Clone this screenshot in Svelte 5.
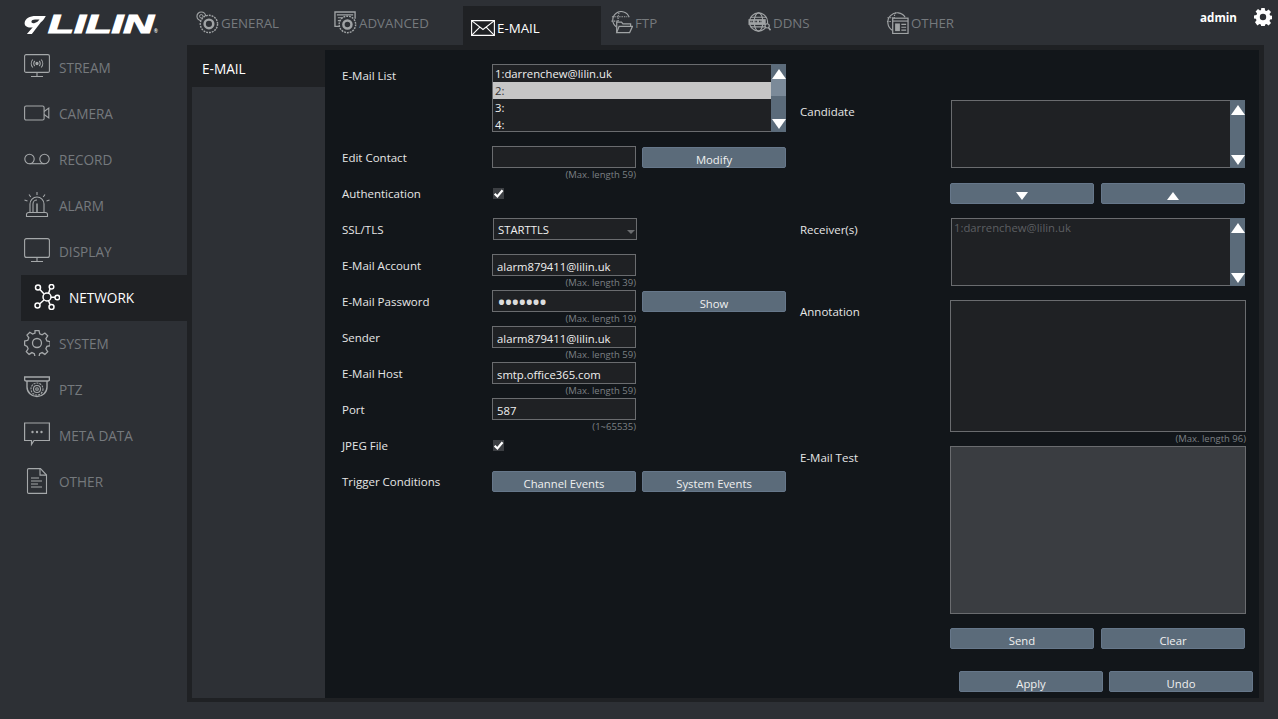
<script>
  const tabs = [
    { name: "GENERAL", icon: "general" },
    { name: "ADVANCED", icon: "advanced" },
    { name: "E-MAIL", icon: "mail", active: true },
    { name: "FTP", icon: "ftp" },
    { name: "DDNS", icon: "ddns" },
    { name: "OTHER", icon: "web" },
  ];

  const nav = [
    { name: "STREAM", icon: "stream" },
    { name: "CAMERA", icon: "camera" },
    { name: "RECORD", icon: "record" },
    { name: "ALARM", icon: "alarm" },
    { name: "DISPLAY", icon: "display" },
    { name: "NETWORK", icon: "network", active: true },
    { name: "SYSTEM", icon: "system" },
    { name: "PTZ", icon: "ptz" },
    { name: "META DATA", icon: "meta" },
    { name: "OTHER", icon: "file" },
  ];

  const contacts = ["1:darrenchew@lilin.uk", "2:", "3:", "4:"];

  const fields = [
    { label: "E-Mail Account", value: "alarm879411@lilin.uk", hint: "(Max. length 39)" },
    { label: "E-Mail Password", value: "•••••••", hint: "(Max. length 19)", button: "Show", dots: true },
    { label: "Sender", value: "alarm879411@lilin.uk", hint: "(Max. length 59)" },
    { label: "E-Mail Host", value: "smtp.office365.com", hint: "(Max. length 59)" },
    { label: "Port", value: "587", hint: "(1~65535)" },
  ];
</script>

{#snippet icon(name)}
  {#if name === "general"}
    <svg class="tab-ico" viewBox="0 0 24 24" fill="none" stroke="currentColor">
      <circle cx="5.5" cy="5.5" r="4.5" stroke-width="1.2" />
      <circle cx="5.5" cy="5.5" r="1.8" stroke-width="1" />
      <circle cx="13.5" cy="13.5" r="9" fill="#2d3035" stroke-width="1.5" stroke-dasharray="2 1" />
      <circle cx="13.5" cy="13.5" r="4.5" stroke-width="2.6" />
    </svg>
  {:else if name === "advanced"}
    <svg class="tab-ico" viewBox="0 0 24 24" fill="none" stroke="currentColor">
      <path d="M7 16H1V1h21v7" stroke-width="1.4" />
      <path d="M3 4h17M4 7h7M4 10h3" stroke-width="1.2" />
      <circle cx="14" cy="14" r="8.6" fill="#2d3035" stroke-width="1.5" stroke-dasharray="2 1" />
      <circle cx="14" cy="14" r="4.2" stroke-width="2.6" />
    </svg>
  {:else if name === "mail"}
    <svg class="tab-ico mail" viewBox="0 0 24 16" fill="none" stroke="#fff" stroke-width="1.1">
      <path d="M.6.6h22.8v14.8H.6z" />
      <path d="M.6.6 12 9.5 23.4.6M.6 15.4l8.2-8.2M23.4 15.4l-8.2-8.2" />
    </svg>
  {:else if name === "ftp"}
    <svg class="tab-ico" viewBox="0 0 24 24" fill="none" stroke="currentColor" stroke-width="1.2">
      <path d="M6.5 16.5A8.8 8.8 0 1 1 20 6.5" />
      <path d="M9.5 2c-1.4 3-1.4 8 0 12M2 6h16M1.500 10.500h7" stroke-dasharray="1.500 1" />
      <path d="M7 22.500V11.500h5l1.500 2h8v3" fill="#2d3035" stroke-width="1.300" />
      <path d="M7 22.500l2.500-6.500h14l-3 6.500z" fill="#2d3035" stroke-width="1.300" />
    </svg>
  {:else if name === "ddns"}
    <svg class="tab-ico" viewBox="0 0 24 24" fill="none" stroke="currentColor" stroke-width="1.2">
      <circle cx="11" cy="11.500" r="9.500" />
      <ellipse cx="11" cy="11.500" rx="4.500" ry="9.500" />
      <path d="M2.500 6.500h17M2.500 16.500h17" />
      <rect x="0.500" y="8.500" width="18" height="6" fill="currentColor" stroke="none" />
      <path d="M2.500 11h3M7 11h3M11.500 11h3" stroke="#2d3035" stroke-width="1.600" stroke-dasharray="1 .5" />
      <circle cx="20" cy="15.500" r="2.200" fill="#2d3035" />
      <path d="m21.500 17.500 2 2.500" stroke-width="1.600" />
    </svg>
  {:else if name === "web"}
    <svg class="tab-ico" viewBox="0 0 24 24" fill="none" stroke="currentColor" stroke-width="1.2">
      <path d="M6.500 20A9.800 9.800 0 1 1 20 6.500" />
      <path d="M10 1.500c-2 4-2 10 0 14M1.500 7h6M1 11h5" stroke-dasharray="1.500 1" />
      <rect x="7" y="7.500" width="16" height="16" fill="#2d3035" stroke-width="1.300" />
      <path d="M7 10.500h16" stroke-width="1.200" />
      <rect x="9.500" y="13" width="5" height="8" fill="currentColor" stroke="none" />
      <path d="M16 14h5M16 17h5M16 20h5" />
    </svg>
  {:else if name === "stream"}
    <svg class="nav-ico" viewBox="0 0 26 26" fill="none" stroke="currentColor" stroke-width="1.100">
      <rect x="0.600" y="0.600" width="24.800" height="17.800" rx="1.500" />
      <path d="M13 18.500v3.500M7 22.500h12" />
      <circle cx="13" cy="9.500" r="1.100" fill="currentColor" />
      <path d="M10.800 7a3.500 3.500 0 0 0 0 5M15.200 7a3.500 3.500 0 0 1 0 5M8.800 5.500a6 6 0 0 0 0 8M17.200 5.500a6 6 0 0 1 0 8" />
    </svg>
  {:else if name === "camera"}
    <svg class="nav-ico" viewBox="0 0 26 26" fill="none" stroke="currentColor" stroke-width="1.100">
      <rect x="0.600" y="6" width="19.500" height="14" rx="1.500" />
      <path d="M20.100 11.500l4.700-3.500v10l-4.700-3.500" />
    </svg>
  {:else if name === "record"}
    <svg class="nav-ico" viewBox="0 0 26 26" fill="none" stroke="currentColor" stroke-width="1.100">
      <circle cx="5.500" cy="13" r="4.700" />
      <circle cx="20.500" cy="13" r="4.700" />
      <path d="M5.500 17.700h15" />
    </svg>
  {:else if name === "alarm"}
    <svg class="nav-ico" viewBox="0 0 26 26" fill="none" stroke="currentColor" stroke-width="1.100">
      <path d="M6 20V12a7 7 0 0 1 14 0v8" />
      <path d="M9 20v-8a4 4 0 0 1 4-4" />
      <path d="M13 11.500V20" stroke-width="1.500" />
      <path d="M2.500 24.500v-2a2 2 0 0 1 2-2h17a2 2 0 0 1 2 2v2z" />
      <path d="M13 0v3M5 2.500l1.800 2.500M21 2.500l-1.800 2.500M.500 8l3 1M25.500 8l-3 1" />
    </svg>
  {:else if name === "display"}
    <svg class="nav-ico" viewBox="0 0 26 26" fill="none" stroke="currentColor" stroke-width="1.100">
      <rect x="0.600" y="0.600" width="24.800" height="18.800" rx="2" />
      <path d="M13 19.500v3.500M7 23.500h12" />
    </svg>
  {:else if name === "network"}
    <svg class="nav-ico" viewBox="0 0 26 26" fill="none" stroke="#fff" stroke-width="1.500">
      <circle cx="13" cy="13" r="4" />
      <circle cx="4" cy="3.500" r="2.500" />
      <circle cx="17.500" cy="2.800" r="2.300" />
      <circle cx="23.300" cy="13.500" r="2.300" />
      <circle cx="17.500" cy="23" r="2.500" />
      <circle cx="3.500" cy="21.500" r="2.500" />
      <path d="M6 5.500l4 4.500M16 5l-1.500 4.500M21 13.300h-4M16 20.500l-1.500-3.900M5.500 20l4.500-4" />
    </svg>
  {:else if name === "system"}
    <svg class="nav-ico" viewBox="0 0 26 26" fill="none" stroke="currentColor" stroke-width="1.300">
      <path d="M11 .6h4l.7 3.200 2.400 1 2.800-1.800 2.800 2.800-1.800 2.800 1 2.400 3.200.7v4l-3.200.7-1 2.400 1.800 2.800-2.800 2.800-2.800-1.800-2.400 1-.7 3.200h-4l-.7-3.200-2.400-1-2.800 1.800-2.800-2.800 1.800-2.800-1-2.400L.6 15v-4l3.200-.7 1-2.400L3 5.100 5.800 2.300l2.800 1.800 2.400-1z" />
      <circle cx="13" cy="13" r="4.500" />
    </svg>
  {:else if name === "ptz"}
    <svg class="nav-ico" viewBox="0 0 26 26" fill="none" stroke="currentColor" stroke-width="1.100">
      <path d="M.6 1h24.800v2.500a1.500 1.500 0 0 1-1.500 1.500H2.100A1.500 1.500 0 0 1 .6 3.500z" stroke-width="1.400" />
      <path d="M3 5v6a10 9.500 0 0 0 20 0V5" stroke-width="1.400" />
      <circle cx="13" cy="13" r="6" stroke-dasharray="2 1" />
      <circle cx="13" cy="13" r="3.500" />
      <circle cx="13" cy="13" r="1.300" />
    </svg>
  {:else if name === "meta"}
    <svg class="nav-ico" viewBox="0 0 26 26" fill="none" stroke="currentColor" stroke-width="1.200">
      <path d="M.6 1h24.800v17.500H10L7.500 22.500v-4H.6z" />
      <circle cx="8.500" cy="10" r="1.200" fill="currentColor" stroke="none" />
      <circle cx="13" cy="10" r="1.200" fill="currentColor" stroke="none" />
      <circle cx="17.500" cy="10" r="1.200" fill="currentColor" stroke="none" />
    </svg>
  {:else if name === "file"}
    <svg class="nav-ico" viewBox="0 0 26 26" fill="none" stroke="currentColor" stroke-width="1.100">
      <path d="M4.700.6h11.800l6 6.400v18.400H4.700a1.200 1.200 0 0 1-1.200-1.200V1.800A1.200 1.200 0 0 1 4.700.6z" />
      <path d="M16 .6v6.500h6.500" />
      <path d="M7 10h8M7 13h11M7 16h7M7 19h11" />
    </svg>
  {/if}
{/snippet}

{#snippet scrollbar(thumb)}
  <div class="scrollbar">
    <span class="arrow up"></span>
    {#if thumb}<span class="thumb"></span>{/if}
    <span class="arrow down"></span>
  </div>
{/snippet}

{#snippet check()}
  <span class="checkbox">
    <svg viewBox="0 0 10 10" fill="none" stroke="#fff" stroke-width="2"><path d="M1.500 5.200 4 7.700 8.700 2" /></svg>
  </span>
{/snippet}

<div class="page">
  <header class="top">
    <div class="logo">
      <svg viewBox="0 0 24 20" width="22" height="18">
        <path fill="#fff" fill-rule="evenodd" d="M13 0h11c-1.500 3-3 5-5.500 7L8.500 20H3l6.500-7.500C5 13.500 0 12 .5 7.500 1 3 6 0 13 0zM8 6.500c0 1.200 1 1.800 3 1.500 3-.5 5-2.500 6-4h-5c-2 0-4 1-4 2.500z" />
      </svg>
      <svg class="wordmark" viewBox="0 0 112 22" width="112" height="22">
        <text x="0" y="20" textLength="106" lengthAdjust="spacingAndGlyphs">LILIN</text>
        <text class="reg" x="106" y="20">®</text>
      </svg>
    </div>
    <nav class="tabs">
      {#each tabs as tab}
        <div class="tab" class:active={tab.active}>
          {@render icon(tab.icon)}
          <span>{tab.name}</span>
        </div>
      {/each}
    </nav>
    <div class="user">
      <span>admin</span>
      <svg viewBox="0 0 18 18" width="18" height="18">
        <path fill="#fff" fill-rule="evenodd" d="M7.300 0h3.400l.4 2.500 1.500.6 2-1.500 2.400 2.400-1.500 2 .6 1.500 2.500.4v3.200l-2.500.4-.6 1.500 1.500 2-2.400 2.400-2-1.500-1.500.6-.4 2.500H7.300l-.4-2.500-1.500-.6-2 1.500L1 14.300l1.500-2-.6-1.500L0 10.600V7.400l2.500-.4.600-1.500L1.600 3.500 4 1.100l2 1.500 1-.6zM9 5.800a3.200 3.200 0 1 0 0 6.400 3.200 3.200 0 0 0 0-6.400z" />
      </svg>
    </div>
  </header>

  <div class="body">
    <aside class="side">
      {#each nav as item}
        <div class="nav-item" class:active={item.active}>
          {@render icon(item.icon)}
          <span>{item.name}</span>
        </div>
      {/each}
    </aside>

    <main class="frame">
      <div class="submenu">
        <div class="sub-item">E-MAIL</div>
      </div>

      <div class="panel">
        <div class="columns">
          <section class="left">
            <div class="row list-row">
              <label>E-Mail List</label>
              <div class="listbox">
                <ul>
                  {#each contacts as contact, i}
                    <li class:selected={i === 1}>{contact}</li>
                  {/each}
                </ul>
                {@render scrollbar(true)}
              </div>
            </div>

            <div class="row">
              <label>Edit Contact</label>
              <div class="field">
                <input type="text" />
                <small>(Max. length 59)</small>
              </div>
              <button>Modify</button>
            </div>

            <div class="row">
              <label>Authentication</label>
              {@render check()}
            </div>

            <div class="row">
              <label>SSL/TLS</label>
              <div class="select">STARTTLS<span class="caret"></span></div>
            </div>

            {#each fields as f}
              <div class="row">
                <label>{f.label}</label>
                <div class="field">
                  <input type="text" class:dots={f.dots} value={f.value} readonly />
                  <small>{f.hint}</small>
                </div>
                {#if f.button}<button>{f.button}</button>{/if}
              </div>
            {/each}

            <div class="row">
              <label>JPEG File</label>
              {@render check()}
            </div>

            <div class="row trigger">
              <label>Trigger Conditions</label>
              <button>Channel Events</button>
              <button>System Events</button>
            </div>
          </section>

          <section class="right">
            <div class="rrow">
              <label>Candidate</label>
              <div class="listbox inset"><ul></ul>{@render scrollbar(false)}</div>
            </div>
            <div class="rrow move-row">
              <span class="spacer"></span>
              <div class="pair">
                <button class="move"><span class="tri down"></span></button>
                <button class="move"><span class="tri up"></span></button>
              </div>
            </div>
            <div class="rrow">
              <label>Receiver(s)</label>
              <div class="listbox inset">
                <ul><li class="muted">1:darrenchew@lilin.uk</li></ul>
                {@render scrollbar(false)}
              </div>
            </div>
            <div class="rrow annotation">
              <label>Annotation</label>
              <div class="area-wrap">
                <textarea></textarea>
                <small>(Max. length 96)</small>
              </div>
            </div>
            <div class="rrow test">
              <label>E-Mail Test</label>
              <div class="test-box"></div>
            </div>
            <div class="rrow">
              <span class="spacer"></span>
              <div class="pair">
                <button>Send</button>
                <button>Clear</button>
              </div>
            </div>
          </section>
        </div>

        <footer class="actions">
          <button>Apply</button>
          <button>Undo</button>
        </footer>
      </div>
    </main>
  </div>
</div>

<style>
  :global(body) {
    background: #2d3035;
    font-family: "Open Sans", "Noto Sans", sans-serif;
    color: #e6e6e6;
  }

  .page {
    width: 1278px;
    height: 719px;
    overflow: hidden;
    display: flex;
    flex-direction: column;
  }

  /* header */
  .top {
    height: 45px;
    display: flex;
    flex-shrink: 0;
  }

  .logo {
    width: 187px;
    box-sizing: border-box;
    padding: 16px 0 0 24px;
    display: flex;
    align-items: flex-start;
    gap: 2px;
  }

  .wordmark {
    margin-top: -3px;
    overflow: visible;
  }

  .wordmark text {
    font-family: "Liberation Sans", sans-serif;
    font-weight: 700;
    font-style: italic;
    font-size: 25px;
    fill: #fff;
    stroke: #fff;
    stroke-width: 1.1px;
  }

  .wordmark .reg {
    font-size: 5px;
    font-style: normal;
    stroke-width: 0;
  }

  .tabs {
    display: flex;
    align-items: flex-end;
    height: 45px;
  }

  .tab {
    width: 138px;
    height: 39px;
    box-sizing: border-box;
    display: flex;
    align-items: center;
    gap: 2px;
    padding: 0 0 6px 9px;
    color: #a0a3a5;
    font-size: 13.3px;
  }

  .tab span {
    color: #75797d;
  }

  .tab.active {
    background: #1f2124;
    padding: 5px 0 0 8px;
  }

  .tab.active span {
    color: #fff;
  }

  .tab-ico {
    width: 23px;
    height: 23px;
    flex-shrink: 0;
  }

  .tab-ico.mail {
    width: 24px;
    height: 16px;
  }

  .user {
    margin-left: auto;
    display: flex;
    gap: 17px;
    padding: 7px 6px 0 0;
    height: 20px;
    align-items: center;
    font-size: 11.6px;
    font-weight: 700;
    color: #fff;
  }

  /* side nav */
  .body {
    display: flex;
    height: 657px;
  }

  .side {
    width: 187px;
    flex-shrink: 0;
    box-sizing: border-box;
    padding-left: 21px;
  }

  .nav-item {
    height: 46px;
    box-sizing: border-box;
    display: flex;
    align-items: center;
    gap: 9px;
    padding: 0 0 2px 3px;
    color: #a5a8aa;
    font-size: 13.6px;
  }

  .nav-item span {
    color: #75797d;
  }

  .nav-item.active {
    background: #1f2124;
    padding-left: 13px;
  }

  .nav-item.active span {
    color: #fff;
  }

  .nav-ico {
    width: 26px;
    height: 26px;
    flex-shrink: 0;
  }

  /* frame */
  .frame {
    width: 1077px;
    box-sizing: border-box;
    padding: 5px 5px 4px;
    background: #1f2124;
    display: flex;
  }

  .submenu {
    width: 133px;
    flex-shrink: 0;
    background: #2d3035;
  }

  .sub-item {
    height: 37px;
    margin-left: -5px;
    padding: 5px 0 0 15px;
    box-sizing: border-box;
    background: #1f2124;
    color: #fff;
    font-size: 13.6px;
    line-height: 28px;
  }

  .panel {
    flex: 1;
    background: #12161a;
    display: flex;
    flex-direction: column;
    font-size: 11.5px;
  }

  .columns {
    flex: 1;
    display: flex;
  }

  .left {
    width: 475px;
    box-sizing: border-box;
    padding: 14px 0 0 17px;
    flex-shrink: 0;
  }

  .row {
    height: 36px;
    display: flex;
    gap: 6px;
    align-items: flex-start;
  }

  .row.list-row {
    height: 82px;
  }

  .row.trigger {
    padding-top: 1px;
  }

  label {
    width: 150px;
    flex-shrink: 0;
    line-height: 24px;
    color: #e6e6e6;
  }

  .row label {
    margin-right: -6px;
  }

  .row.trigger label {
    line-height: 22px;
  }

  .field {
    width: 144px;
    display: flex;
    flex-direction: column;
  }

  input {
    width: 144px;
    height: 22px;
    box-sizing: border-box;
    background: #1f2124;
    border: 1px solid #6a6c6f;
    color: #f0f0f0;
    font: inherit;
    font-size: 11.3px;
    padding: 2px 4px 0;
    outline: none;
  }

  input.dots {
    font-size: 24px;
    letter-spacing: -2.1px;
    padding: 0 4px;
    line-height: 20px;
    color: #dcdcdc;
  }

  small {
    font-size: 9.5px;
    line-height: 14px;
    text-align: right;
    color: #7c8084;
  }

  button {
    width: 144px;
    height: 21px;
    padding: 3px 0 0;
    background: #5b6b7a;
    border: 1px solid #66778a;
    border-radius: 2px;
    color: #f0f0f0;
    font: inherit;
    font-size: 11.3px;
    line-height: 18px;
  }

  .row > button {
    margin-top: 1px;
  }

  .row.trigger > button {
    margin-top: 0;
  }

  /* list boxes */
  .listbox {
    width: 294px;
    height: 68px;
    box-sizing: border-box;
    display: flex;
    background: #1f2124;
    border: 1px solid #6a6c6f;
  }

  .listbox.inset {
    margin-left: 1px;
  }

  ul {
    flex: 1;
    list-style: none;
    margin: 0;
    padding: 0;
    overflow: hidden;
    font-size: 11.3px;
  }

  li {
    height: 17px;
    line-height: 17px;
    padding-left: 2px;
    color: #f0f0f0;
  }

  li.selected {
    background: #c6c6c6;
    color: #333;
  }

  li.muted {
    color: #5d5f62;
    line-height: 18px;
  }

  .scrollbar {
    width: 15px;
    margin: -1px -1px -1px 0;
    position: relative;
    background: #5b6b7a;
    display: flex;
    flex-direction: column;
    align-items: center;
    padding: 5px 0 3px;
    box-sizing: border-box;
    justify-content: space-between;
  }

  .thumb {
    position: absolute;
    left: 0;
    right: 0;
    top: 15px;
    height: 17px;
    background: #7b8a99;
  }

  .arrow,
  .tri {
    width: 0;
    height: 0;
    border-left: 7px solid transparent;
    border-right: 7px solid transparent;
    position: relative;
    z-index: 1;
  }

  .arrow.up {
    border-bottom: 10px solid #fff;
  }

  .arrow.down {
    border-top: 10px solid #fff;
  }

  /* select and checkbox */
  .select {
    width: 144px;
    height: 22px;
    margin-left: 1px;
    box-sizing: border-box;
    background: #1f2124;
    border: 1px solid #6a6c6f;
    line-height: 22px;
    padding-left: 4px;
    color: #f0f0f0;
    font-size: 11.3px;
    position: relative;
  }

  .caret {
    position: absolute;
    right: 1px;
    top: 11px;
    border-left: 4px solid transparent;
    border-right: 4px solid transparent;
    border-top: 4px solid #6a6c6f;
  }

  .checkbox {
    width: 11px;
    height: 11px;
    margin: 6px 0 0 1px;
    background: #3c3f43;
    display: block;
  }

  .checkbox svg {
    display: block;
    width: 11px;
    height: 11px;
  }

  /* right column */
  .right {
    flex: 1;
    padding-top: 50px;
    display: flex;
    flex-direction: column;
    gap: 14px;
  }

  .rrow {
    display: flex;
    align-items: flex-start;
  }

  .rrow label,
  .spacer {
    width: 150px;
    flex-shrink: 0;
  }

  .rrow.move-row {
    margin-top: 1px;
  }

  .pair {
    display: flex;
    gap: 7px;
  }

  .move {
    padding: 0;
    display: flex;
    align-items: center;
    justify-content: center;
  }

  .tri {
    border-left-width: 6px;
    border-right-width: 6px;
    top: 2px;
  }

  .tri.down {
    border-top: 8px solid #fff;
  }

  .tri.up {
    border-bottom: 8px solid #fff;
  }

  .area-wrap {
    width: 296px;
    display: flex;
    flex-direction: column;
  }

  textarea {
    height: 132px;
    box-sizing: border-box;
    background: #1f2124;
    border: 1px solid #6a6c6f;
    resize: none;
    outline: none;
    display: block;
  }

  .rrow.annotation {
    margin-bottom: -14px;
  }

  .test-box {
    width: 296px;
    height: 168px;
    box-sizing: border-box;
    background: #3a3d41;
    border: 1px solid #6a6c6f;
  }

  .actions {
    display: flex;
    justify-content: flex-end;
    gap: 6px;
    padding: 0 6px 6px 0;
  }
</style>
